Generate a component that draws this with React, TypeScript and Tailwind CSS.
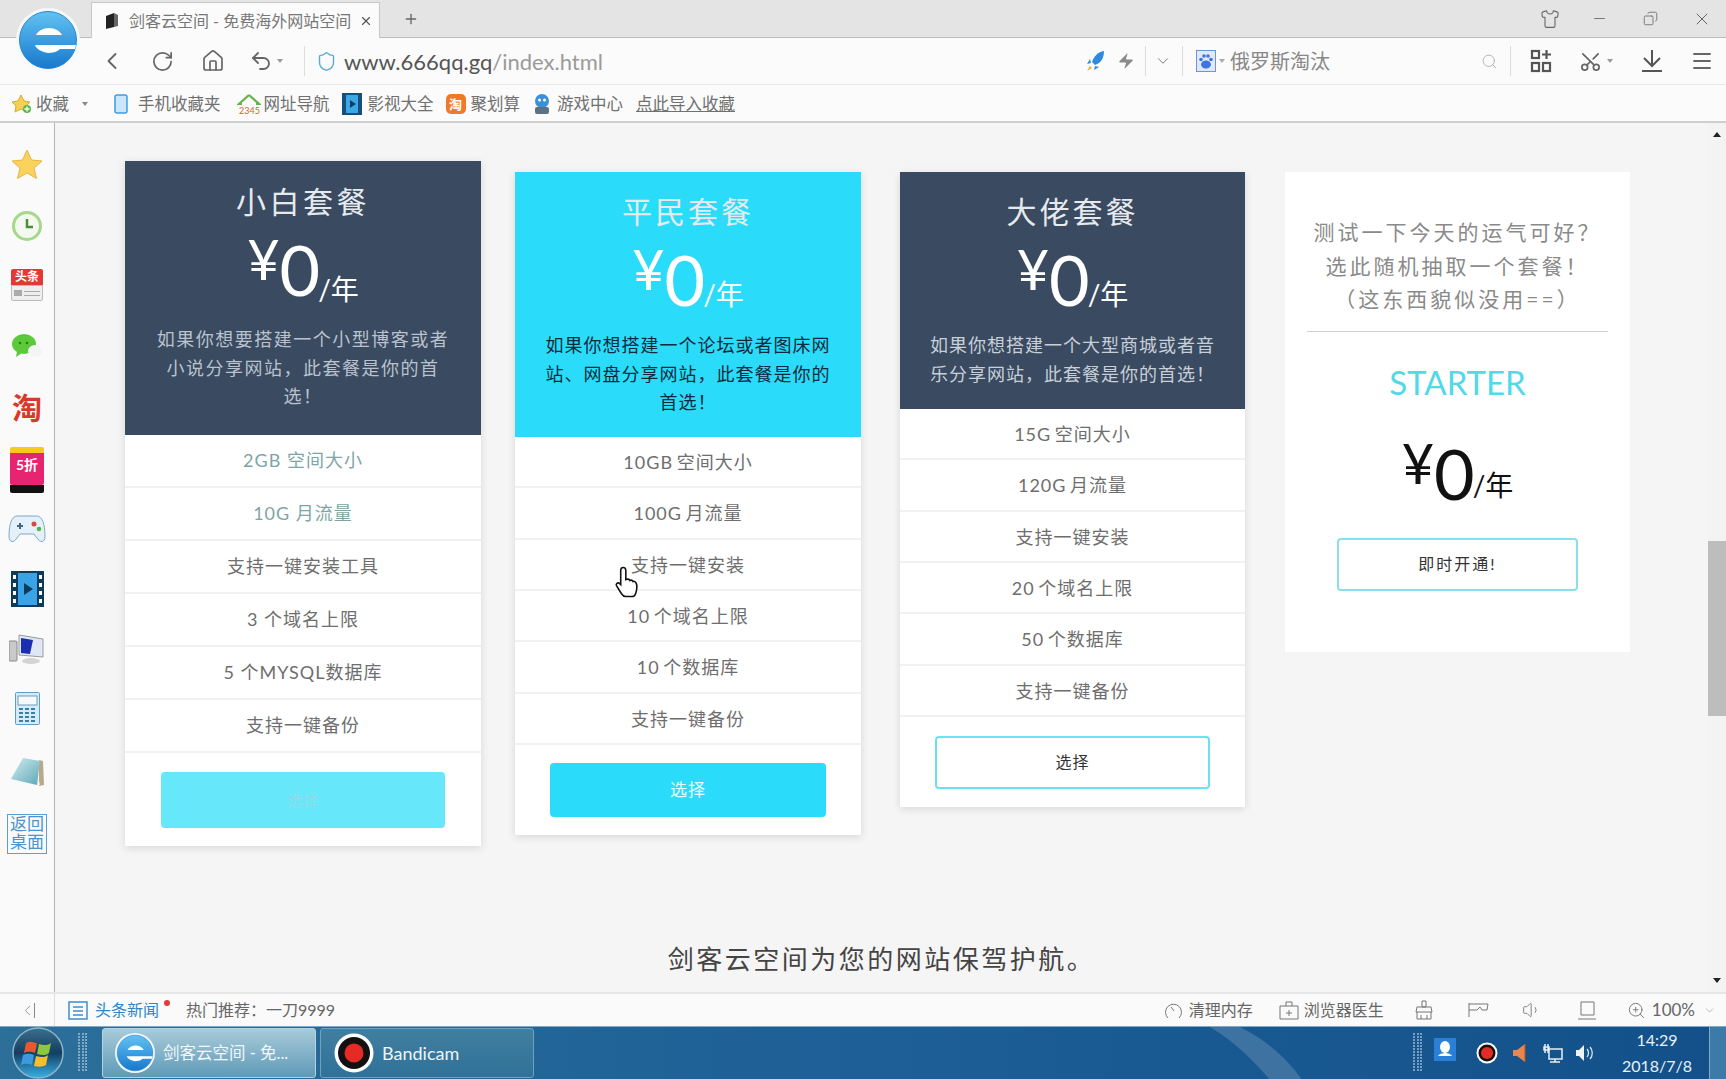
import React from 'react';
import { ChevronLeft, ChevronDown, RotateCw, House, Undo2, Shirt, Minus, Copy, X, Plus, Search, Scissors, Menu, Zap, Volume1, ZoomIn, Shield } from 'lucide-react';

function IeLogo({ size = 64, id }: { size?: number; id: string }) {
  return (
    <svg width={size} height={size} viewBox="0 0 64 64">
      <defs>
        <linearGradient id={id} x1="0" y1="0" x2="0" y2="1">
          <stop offset="0" stopColor="#62c2f2" />
          <stop offset="1" stopColor="#1878cc" />
        </linearGradient>
      </defs>
      <circle cx="32" cy="32" r="32" fill="#f4f8fb" />
      <circle cx="32" cy="32" r="28.500" fill={`url(#${id})`} stroke="#2a88d2" />
      <path d="M20 27c2-4 7-7 13-7s11 3 13 7z" fill="#fff" />
      <path d="M19 37h41l-1 4H44c-3 3-8 4-12 4-6-1-12-4-13-8z" fill="#fff" />
    </svg>
  );
}

function TopBar() {
  return (
    <div className="relative shrink-0">
      <div className="absolute left-[16px] top-[8px] z-10">
        <IeLogo size={64} id="ieTop" />
      </div>
      <div className="h-[38px] bg-[#e4e4e4] border-b border-[#bcbcbc] flex items-end pl-[91px] pr-[14px]">
        <div className="w-[289px] h-[36px] -mb-px bg-[#fbfbfb] border-x border-t border-[#c8c8c8] flex items-center pl-[12px] text-[16px] text-[#777]">
          <svg width="16" height="18" viewBox="0 0 16 18" className="shrink-0"><path d="M2 4l8-3v14l-8 2z" fill="#222" /><path d="M10 1l4 2v11l-4 1z" fill="#666" /></svg>
          <span className="ml-[9px] w-[224px] whitespace-nowrap overflow-hidden">剑客云空间 - 免费海外网站空间</span>
          <X size={14} className="ml-[6px] shrink-0 text-[#555]" />
        </div>
        <Plus size={16} strokeWidth={2} className="ml-[23px] mb-[10px] text-[#666]" />
        <div className="ml-auto flex items-center h-full text-[#666]">
          <Shirt size={20} strokeWidth={1.3} />
          <Minus size={17} strokeWidth={1.2} className="ml-[31px]" />
          <Copy size={15} strokeWidth={1.3} className="ml-[35px] -scale-x-100" />
          <X size={20} strokeWidth={1.2} className="ml-[34px]" />
        </div>
      </div>
      <div className="h-[47px] bg-[#fbfbfb] border-b border-[#eaeaea] flex items-center text-[#666] relative">
        <ChevronLeft size={28} strokeWidth={1.6} className="ml-[98px]" />
        <RotateCw size={23} strokeWidth={1.8} className="ml-[25px]" />
        <House size={24} strokeWidth={1.7} className="ml-[27px]" />
        <Undo2 size={24} strokeWidth={1.8} className="ml-[24px]" />
        <span className="ml-[4px] w-0 h-0 border-x-[3px] border-x-transparent border-t-[4px] border-t-[#999]" />
        <span className="ml-[21px] w-px h-[30px] bg-[#ddd]" />
        <Shield size={21} strokeWidth={1.6} className="ml-[11px] text-[#59a9d8]" />
        <span className="ml-[7px] text-[22px] text-[#9a9a9a]"><span className="text-[#555]">www.666qq.gq</span>/index.html</span>
        <div className="ml-auto flex items-center">
          <svg width="20" height="22" viewBox="0 0 20 22"><path d="M18 1c-6 1-10 5-12 11l3 3c6-2 9-7 9-14z" fill="#2d8be0" /><path d="M5 13l-4 1 3-5zM9 16l-1 4 5-3z" fill="#2d8be0" /><path d="M4 16l2 2-5 3z" fill="#f2a833" /></svg>
          <Zap size={18} strokeWidth={0} className="ml-[11px] fill-[#8a8a8a]" />
          <span className="ml-[10px] w-px h-[30px] bg-[#ddd]" />
          <ChevronDown size={18} strokeWidth={1.3} className="ml-[8px] text-[#777]" />
          <span className="ml-[10px] w-px h-[30px] bg-[#ddd]" />
          <svg width="20" height="22" viewBox="0 0 20 22" className="ml-[13px]"><rect x="0.5" y="0.5" width="19" height="21" fill="#dfe9fa" stroke="#6e93dc" /><ellipse cx="10" cy="14.5" rx="5" ry="4" fill="#3f75dd" /><circle cx="5" cy="9.5" r="1.8" fill="#3f75dd" /><circle cx="8" cy="6" r="1.8" fill="#3f75dd" /><circle cx="12" cy="6" r="1.8" fill="#3f75dd" /><circle cx="15" cy="9.5" r="1.8" fill="#3f75dd" /></svg>
          <span className="ml-[3px] w-0 h-0 border-x-[3px] border-x-transparent border-t-[4px] border-t-[#aaa]" />
          <span className="ml-[5px] w-[251px] text-[20px] leading-none text-[#888]">俄罗斯淘汰</span>
          <Search size={17} strokeWidth={1.2} className="text-[#aaa]" />
          <span className="ml-[12px] w-px h-[30px] bg-[#ddd]" />
          <svg width="22" height="24" viewBox="0 0 22 24" fill="none" stroke="#555" strokeWidth="2.2" className="ml-[19px]"><rect x="2" y="2" width="7" height="7" /><rect x="2" y="14" width="7" height="8" /><rect x="13" y="14" width="7" height="8" /><path d="M16.500 1v9M12 5.500h9" /></svg>
          <Scissors size={23} strokeWidth={1.8} className="ml-[27px] -rotate-90" />
          <span className="ml-[5px] w-0 h-0 border-x-[3px] border-x-transparent border-t-[4px] border-t-[#999]" />
          <svg width="22" height="24" viewBox="0 0 22 24" fill="none" stroke="#555" strokeWidth="2" className="ml-[28px]"><path d="M11 1v15M3 9l8 8 8-8M1 22h20" /></svg>
          <Menu size={24} strokeWidth={1.9} className="ml-[27px] mr-[12px]" />
        </div>
      </div>
      <div className="h-[38px] pt-[2px] bg-[#fbfbfb] border-b-2 border-[#cfcfcf] flex items-center text-[16.500px] text-[#707070] pl-[11px] whitespace-nowrap">
        <svg width="22" height="20" viewBox="0 0 22 20"><path d="M10 1l3 6 6 1-4 4 1 6-6-3-6 3 1-6-4-4 6-1z" fill="#f7cf55" stroke="#d8a92f" /><circle cx="16" cy="15" r="4" fill="#57b84b" /><path d="M16 12.500v5M13.500 15h5" stroke="#fff" strokeWidth="1.300" /></svg>
        <span className="ml-[3px]">收藏</span>
        <span className="ml-[13px] w-0 h-0 border-x-[3px] border-x-transparent border-t-[4px] border-t-[#888]" />
        <svg width="14" height="20" viewBox="0 0 14 20" className="ml-[26px]"><rect x="1" y="1" width="12" height="18" rx="2" fill="#c9e6fa" stroke="#3f9ddf" strokeWidth="1.500" /></svg>
        <span className="ml-[10px]">手机收藏夹</span>
        <svg width="24" height="22" viewBox="0 0 24 22" className="ml-[16px]"><path d="M12 2L2 11h3M12 2l10 9h-3" fill="none" stroke="#63b446" strokeWidth="2.200" /><text x="2" y="21" fontSize="9" fill="#d9622b" fontFamily="Lato">2345</text></svg>
        <span className="ml-[3px]">网址导航</span>
        <svg width="20" height="22" viewBox="0 0 20 22" className="ml-[12px]"><rect width="20" height="22" fill="#14507f" /><rect x="4" y="2" width="12" height="18" fill="#3ea7e6" /><path d="M8 7l6 4-6 4z" fill="#0e3f66" /></svg>
        <span className="ml-[6px]">影视大全</span>
        <span className="ml-[12px] w-[20px] h-[20px] rounded-[5px] bg-[#f0792a] text-white text-[13px] leading-[20px] text-center font-bold">淘</span>
        <span className="ml-[5px]">聚划算</span>
        <svg width="18" height="22" viewBox="0 0 18 22" className="ml-[13px]"><ellipse cx="9" cy="8" rx="7" ry="7" fill="#3a90d8" /><circle cx="6.500" cy="7" r="1.500" fill="#fff" /><circle cx="11.500" cy="7" r="1.500" fill="#fff" /><rect x="2" y="14" width="14" height="7" rx="2" fill="#5a7186" /></svg>
        <span className="ml-[6px]">游戏中心</span>
        <span className="ml-[13px] underline">点此导入收藏</span>
      </div>
    </div>
  );
}

function SideBar() {
  return (
    <div className="w-[55px] shrink-0 bg-[#fafafa] border-r border-[#b5b5b5] flex flex-col items-center pt-[26px]">
      <div className="h-[62px]">
        <svg width="32" height="30" viewBox="0 0 32 30"><path d="M16 1l4.500 10 10.500 1-8 7 2.500 10.500L16 24l-9.500 5.500L9 19l-8-7 10.500-1z" fill="#fbd35c" stroke="#e5b547" /></svg>
      </div>
      <div className="h-[58px]">
        <svg width="30" height="30" viewBox="0 0 30 30" fill="none"><circle cx="15" cy="15" r="13.500" fill="#f3f9ee" stroke="#a5d88a" strokeWidth="3" /><path d="M15 8v8h6" stroke="#4b8c3a" strokeWidth="2.500" /></svg>
      </div>
      <div className="h-[63px] w-[32px]">
        <div className="h-[16px] bg-[#e03a35] text-white text-[12px] leading-[16px] text-center font-bold rounded-t-[2px]">头条</div>
        <div className="h-[16px] bg-[#eee] border border-[#bbb] rounded-b-[2px] flex items-center gap-[2px] px-[2px]"><span className="w-[8px] h-[6px] bg-[#aaa]" /><span className="flex-1 h-[5px] border-y border-[#aaa]" /></div>
      </div>
      <div className="h-[57px]">
        <svg width="32" height="28" viewBox="0 0 32 28"><ellipse cx="13" cy="12" rx="12" ry="10" fill="#5cc83b" /><path d="M6 19l-1 6 6-4z" fill="#5cc83b" /><circle cx="9" cy="11" r="1.300" fill="#2d7a1c" /><circle cx="16" cy="11" r="1.300" fill="#2d7a1c" /><ellipse cx="24" cy="19" rx="7" ry="6" fill="#f4f4f4" /></svg>
      </div>
      <div className="h-[60px] text-[#d8392c] text-[30px] leading-[36px] font-bold">淘</div>
      <div className="h-[65px] w-[34px]">
        <div className="h-[38px] mt-[-2px] bg-[#e7246f] rounded-[2px] border-t-[6px] border-[#f7c81e] text-white text-[14px] leading-[24px] text-center font-bold">5折</div>
        <div className="h-[8px] bg-[#111] rounded-b-[2px]" />
      </div>
      <div className="h-[57px]">
        <svg width="38" height="30" viewBox="0 0 38 30"><path d="M9 2h20c5 0 8 8 8 20 0 7-5 7-8 2l-3-4H12l-3 4c-3 5-8 5-8-2C1 10 4 2 9 2z" fill="#e5f1fa" stroke="#7fa8c8" /><path d="M12 9v6M9 12h6" stroke="#41688c" strokeWidth="2" /><circle cx="26" cy="10" r="2.500" fill="#d94a3f" /><circle cx="31" cy="15" r="2.300" fill="#5ab548" /></svg>
      </div>
      <div className="h-[62px]">
        <svg width="33" height="36" viewBox="0 0 33 36"><rect width="33" height="36" fill="#0d3b5c" /><rect x="7" y="2" width="19" height="32" fill="#3aa3e5" /><path d="M13 12l9 6-9 6z" fill="#0d3b5c" /><path d="M2 4h3v4H2zM2 12h3v4H2zM2 20h3v4H2zM2 28h3v4H2zM28 4h3v4h-3zM28 12h3v4h-3zM28 20h3v4h-3zM28 28h3v4h-3z" fill="#fff" /></svg>
      </div>
      <div className="h-[59px]">
        <svg width="36" height="32" viewBox="0 0 36 32"><rect x="0" y="8" width="8" height="20" rx="1" fill="#c9c9c9" stroke="#888" /><path d="M10 2l24 4v18l-24-2z" fill="#dfe7f5" stroke="#999" /><path d="M12 5l12 2-3 14-9-1z" fill="#1a2fb0" /><ellipse cx="22" cy="28" rx="9" ry="3" fill="#d4d4d4" /></svg>
      </div>
      <div className="h-[66px]">
        <svg width="25" height="33" viewBox="0 0 25 33"><rect x="0.500" y="0.500" width="24" height="32" rx="1" fill="#d6ebf8" stroke="#5d9dc8" /><rect x="3" y="4" width="19" height="9" fill="#f5f9fc" stroke="#6e9dbc" /><path d="M4 17h4M10 17h4M16 17h4M4 21h4M10 21h4M16 21h4M4 25h4M10 25h4M16 25h4M4 29h4M10 29h4M16 29h4" stroke="#3c7eaa" strokeWidth="2" /></svg>
      </div>
      <div className="h-[56px]">
        <svg width="34" height="30" viewBox="0 0 34 30">
          <defs>
            <linearGradient id="noteBlue" x1="0" y1="0" x2="1" y2="1">
              <stop offset="0" stopColor="#d2ecf0" />
              <stop offset="1" stopColor="#5fa8b8" />
            </linearGradient>
          </defs>
          <path d="M29 2l4 1 1 24-5 1z" fill="#b9a98a" />
          <path d="M28 18l2 9-8-1z" fill="#f2f2f2" />
          <path d="M13 0l17 3-3 24L1 21z" fill="url(#noteBlue)" />
        </svg>
      </div>
      <div className="w-[40px] h-[40px] border border-[#5ba0d3] text-[#4b94cc] text-[17px] leading-[18px] text-center">返回<br />桌面</div>
    </div>
  );
}

function Price({ unitCls = 'mb-[2px]' }: { unitCls?: string }) {
  return (
    <div className="flex items-end justify-center">
      <span className="text-[56px] leading-[50px] mb-[20px]">¥</span>
      <span className="text-[70px] leading-[70px]">0</span>
      <span className={`text-[28px] leading-[36px] -ml-[2px] ${unitCls}`}>/年</span>
    </div>
  );
}

type PlanProps = {
  title: string;
  desc: string;
  rows: string[];
  wide?: boolean;
  headBg: string;
  descCls: string;
  pad: string;
  teal?: boolean;
  button: React.ReactNode;
  cls: string;
};

function Plan({ title, desc, rows, wide, headBg, descCls, pad, teal, button, cls }: PlanProps) {
  return (
    <div className={`bg-white shadow-[0_2px_8px_rgba(0,0,0,0.12)] shrink-0 ${cls}`}>
      <div className={`${headBg} ${pad} text-center text-white`}>
        <div className={`text-[30px] leading-[40px] text-[#e6eaee] ${wide ? 'tracking-[3.500px]' : 'tracking-[3px]'}`}>{title}</div>
        <div className="mt-[13px]"><Price unitCls={wide ? '-mb-[3px]' : 'mb-[2px]'} /></div>
        <div className={`${wide ? 'mt-[21px] tracking-[1.500px] px-[30px]' : 'mt-[17px] tracking-[1px] px-[30px]'} text-[18px] leading-[28.500px] ${descCls}`}>{desc}</div>
      </div>
      {rows.map((r, i) => (
        <div key={r} className={`${wide ? 'h-[53px]' : 'h-[51.330px] pt-[2px] [word-spacing:-2px]'} flex items-center justify-center border-b-2 border-[#f1f1f1] text-[18px] tracking-[1px] ${teal && i < 2 ? 'text-[#7ea5a5]' : 'text-[#6e6e6e]'}`}>{r}</div>
      ))}
      {button}
    </div>
  );
}

function Content() {
  return (
    <div className="flex-1 min-w-0 bg-[#f5f5f5] flex flex-col items-stretch pl-[70px] relative">
      <div className="flex items-start">
        <Plan
          wide
          cls="w-[356px] mt-[38px]"
          headBg="bg-[#3a4a61]"
          pad="pt-[20px] h-[274px]"
          descCls="text-[#b9c2cd]"
          title="小白套餐"
          desc="如果你想要搭建一个小型博客或者小说分享网站，此套餐是你的首选！"
          teal
          rows={['2GB 空间大小', '10G 月流量', '支持一键安装工具', '3 个域名上限', '5 个MYSQL数据库', '支持一键备份']}
          button={
            <div className="pt-[19px] pb-[18px] px-[36px]">
              <div className="h-[56px] rounded-[4px] bg-[#66e7fa] text-[#8fdcea] text-[16px] flex items-center justify-center">选择</div>
            </div>
          }
        />
        <Plan
          cls="w-[346px] ml-[34px] mt-[49px]"
          headBg="bg-[#2adcfa]"
          pad="pt-[19px] h-[265px]"
          descCls="text-[#0d2a3a]"
          title="平民套餐"
          desc="如果你想搭建一个论坛或者图床网站、网盘分享网站，此套餐是你的首选！"
          rows={['10GB 空间大小', '100G 月流量', '支持一键安装', '10 个域名上限', '10 个数据库', '支持一键备份']}
          button={
            <div className="pt-[18px] pb-[18px] px-[35px]">
              <div className="h-[54px] rounded-[4px] bg-[#2adcfa] text-[#e6fbff] text-[17px] tracking-[1px] flex items-center justify-center">选择</div>
            </div>
          }
        />
        <Plan
          cls="w-[345px] ml-[39px] mt-[49px]"
          headBg="bg-[#3a4a61]"
          pad="pt-[19px] h-[237px]"
          descCls="text-[#c8cfd8]"
          title="大佬套餐"
          desc="如果你想搭建一个大型商城或者音乐分享网站，此套餐是你的首选！"
          rows={['15G 空间大小', '120G 月流量', '支持一键安装', '20 个域名上限', '50 个数据库', '支持一键备份']}
          button={
            <div className="pt-[19px] pb-[18px] px-[35px]">
              <div className="h-[53px] rounded-[4px] border-2 border-[#6ce2ef] text-[#333] text-[16px] tracking-[1px] flex items-center justify-center">选择</div>
            </div>
          }
        />
        <div className="w-[345px] ml-[40px] mt-[49px] h-[480px] bg-white shrink-0 flex flex-col items-center pt-[43px]">
          <div className="text-[21px] leading-[33.500px] tracking-[3px] text-[#8a8a8a] text-center whitespace-nowrap">
            测试一下今天的运气可好？<br />选此随机抽取一个套餐！<br />（这东西貌似没用==）
          </div>
          <div className="w-[301px] h-px bg-[#cfcfcf] mt-[15px]" />
          <div className="text-[33px] leading-[40px] text-[#52d9e8] mt-[30px]">STARTER</div>
          <div className="mt-[36px] text-[#111]"><Price unitCls="mb-[5px]" /></div>
          <div className="w-[241px] h-[53px] mt-[30px] rounded-[4px] border-2 border-[#8ae0ea] text-[#333] text-[16px] tracking-[2px] flex items-center justify-center">即时开通!</div>
        </div>
      </div>
      <div className="mt-[96px] pr-[70px] text-center text-[26px] leading-[34px] tracking-[2.500px] text-[#444]">剑客云空间为您的网站保驾护航。</div>
      <svg width="30" height="34" viewBox="0 0 24 28" className="absolute left-[558px] top-[442px]">
        <path d="M8 2c1.500 0 2.200 1 2.200 2.500V12l1-.3c1-.2 2 .2 2.300 1 1-.4 2.200-.1 2.600.9 1-.3 2.200.2 2.500 1.200.8 1.500.8 5-.1 8-.5 2-1.500 3.200-3 3.200H10c-1.500 0-2.500-1-3.500-2.500L2.500 17c-.7-1.300 1-3 2.500-1.800l1 1V4.500C6 3 6.700 2 8 2z" fill="#fff" stroke="#111" strokeWidth="1.300" />
      </svg>
    </div>
  );
}

function ScrollBar() {
  return (
    <div className="w-[18px] shrink-0 bg-[#f3f3f3] flex flex-col items-center">
      <span className="mt-[9px] w-0 h-0 border-x-[4px] border-x-transparent border-b-[5px] border-b-[#222]" />
      <div className="w-[18px] h-[175px] mt-[404px] bg-[#bdbdbd]" />
      <span className="mt-auto mb-[9px] w-0 h-0 border-x-[4px] border-x-transparent border-t-[5px] border-t-[#222]" />
    </div>
  );
}

function StatusBar() {
  return (
    <div className="h-[34px] shrink-0 bg-[#fafafa] border-t-2 border-[#e6e6e6] flex items-center text-[16px] text-[#666] whitespace-nowrap">
      <div className="w-[55px] h-full border-r border-[#ddd] flex items-center justify-center text-[#888]">
        <ChevronLeft size={17} strokeWidth={1.2} />
        <span className="w-px h-[15px] bg-[#888] -ml-[2px]" />
      </div>
      <svg width="20" height="19" viewBox="0 0 20 19" fill="none" stroke="#3e8fd0" strokeWidth="1.500" className="ml-[13px]"><rect x="1" y="1" width="18" height="17" /><path d="M5 6h10M5 10h10M5 14h10" /></svg>
      <span className="ml-[7px] text-[#2f86c9]">头条新闻</span>
      <span className="ml-[5px] mb-[14px] w-[6px] h-[6px] rounded-full bg-[#e23b3b]" />
      <span className="ml-[16px]">热门推荐：一刀9999</span>
      <div className="ml-auto flex items-center text-[#666]">
        <svg width="19" height="19" viewBox="0 0 19 19" fill="none" stroke="#777"><path d="M4 17a8 8 0 1 1 11 0" /><path d="M7 6l3 4" /></svg>
        <span className="ml-[6px]">清理内存</span>
        <svg width="20" height="19" viewBox="0 0 20 19" fill="none" stroke="#777" className="ml-[26px]"><path d="M1 5h18v13H1zM7 5V1h6v4M10 9v6M7 12h6" /></svg>
        <span className="ml-[5px]">浏览器医生</span>
        <svg width="20" height="20" viewBox="0 0 20 20" fill="none" stroke="#777" className="ml-[30px]"><path d="M8 1h4v6H8zM3 7h14l1 5H2zM3 12v7h14v-7M7 19v-4M13 19v-4" /></svg>
        <svg width="22" height="16" viewBox="0 0 22 16" fill="none" stroke="#777" className="ml-[33px]"><path d="M2 1v14M2 2h19l-1 6h-5l-2-3-3 3H2" /></svg>
        <Volume1 size={20} strokeWidth={1.1} className="ml-[33px] text-[#777]" />
        <svg width="20" height="19" viewBox="0 0 20 19" fill="none" stroke="#777" className="ml-[35px]"><path d="M4 1h13v13H4zM1 18h18" /></svg>
        <ZoomIn size={19} strokeWidth={1.200} className="ml-[30px] text-[#777]" />
        <span className="ml-[6px] text-[17px]">100%</span>
        <ChevronDown size={13} strokeWidth={1.200} className="ml-[8px] mr-[10px] text-[#999]" />
      </div>
    </div>
  );
}

function TaskBar() {
  return (
    <div className="relative h-[53px] shrink-0 border-t border-[#7fa9c6] bg-gradient-to-r from-[#2c6f99] via-[#1d5f96] to-[#13508a] flex items-center overflow-hidden whitespace-nowrap text-white">
      <svg width="130" height="53" viewBox="0 0 130 53" className="absolute left-[1190px] top-0"><path d="M20 0h30c30 15 50 35 62 53H80C65 35 45 15 20 0z" fill="#fff" opacity="0.16" /></svg>
      <svg width="52" height="52" viewBox="0 0 52 52" className="ml-[12px] shrink-0">
        <defs>
          <linearGradient id="orbBg" x1="0" y1="0" x2="0" y2="1">
            <stop offset="0" stopColor="#3d6f8c" />
            <stop offset="0.5" stopColor="#123f63" />
            <stop offset="1" stopColor="#3cb0e4" />
          </linearGradient>
        </defs>
        <circle cx="26" cy="26" r="25" fill="url(#orbBg)" stroke="#8db4c9" strokeWidth="1.500" />
        <path d="M14 16c5-3 8 0 11 0l-2 10c-3-1-7-2-11 0z" fill="#e8572e" />
        <path d="M27 17c4 1 8 2 12-1l-2 10c-3 3-8 2-12 1z" fill="#8dc63f" />
        <path d="M11 28c4-2 8-1 11 0l-2 10c-3-1-7-2-11 0z" fill="#3c9ae0" />
        <path d="M24 29c4 1 9 2 12-1l-2 10c-3 2-8 2-12 1z" fill="#f8bd2a" />
      </svg>
      <div className="ml-[14px] w-[10px] h-[40px] grid grid-cols-3 gap-px opacity-50 shrink-0 content-start">
        {Array.from({ length: 39 }).map((_, i) => <span key={i} className="w-[2px] h-[2px] bg-[#dbe8f2]" />)}
      </div>
      <div className="ml-[14px] w-[214px] h-[50px] rounded-[3px] border border-[#b5d2df] bg-gradient-to-b from-[#a8cbd9] to-[#5e9ab8] flex items-center pl-[12px] shrink-0">
        <IeLogo size={40} id="ieTask" />
        <span className="ml-[8px] text-[16.500px] text-[#f1f7fa]">剑客云空间 - 免...</span>
      </div>
      <div className="ml-[4px] w-[214px] h-[50px] rounded-[3px] border border-[#6fa2bd] bg-gradient-to-b from-[#417f9f] to-[#2f7199] flex items-center pl-[13px] shrink-0">
        <svg width="40" height="40" viewBox="0 0 40 40"><circle cx="20" cy="20" r="19.500" fill="#fff" /><circle cx="20" cy="20" r="16" fill="#111" /><circle cx="20" cy="20" r="9.500" fill="#e52b25" /></svg>
        <span className="ml-[8px] text-[18px] text-[#eef5f9]">Bandicam</span>
      </div>
      <div className="ml-auto flex items-center shrink-0">
        <div className="w-[10px] h-[40px] grid grid-cols-3 gap-px opacity-50 content-start">
          {Array.from({ length: 39 }).map((_, i) => <span key={i} className="w-[2px] h-[2px] bg-[#dbe8f2]" />)}
        </div>
        <svg width="22" height="23" viewBox="0 0 22 23" className="ml-[11px] mb-[8px]"><rect width="22" height="23" fill="#2a80d8" /><ellipse cx="11" cy="9" rx="5" ry="6" fill="#fff" /><path d="M4 18c2-4 12-4 14 0z" fill="#fff" /></svg>
        <svg width="22" height="22" viewBox="0 0 22 22" className="ml-[20px]"><circle cx="11" cy="11" r="10.500" fill="#fff" /><circle cx="11" cy="11" r="8.500" fill="#111" /><circle cx="11" cy="11" r="6" fill="#e52b25" /></svg>
        <svg width="16" height="20" viewBox="0 0 16 20" className="ml-[13px]"><path d="M2 7h4l8-6v18l-8-6H2z" fill="#e8864f" /><path d="M14 1v18" stroke="#b5532a" /></svg>
        <svg width="20" height="20" viewBox="0 0 20 20" fill="none" stroke="#e6eef4" strokeWidth="1.500" className="ml-[16px]"><rect x="6" y="6" width="13" height="10" /><path d="M2 1v9M5 1v9M1 4h5v3H1zM12 16v3M7 19h10" /></svg>
        <svg width="20" height="20" viewBox="0 0 20 20" className="ml-[12px]"><path d="M1 7h3l5-5v16l-5-5H1z" fill="#edf3f7" /><path d="M12 6c2 2 2 6 0 8M15 4c3 3 3 9 0 12" fill="none" stroke="#dce7ef" strokeWidth="1.300" /></svg>
        <div className="ml-[18px] w-[88px] text-center text-[16px] leading-[26px] text-[#e8f1f6]">14:29<br />2018/7/8</div>
        <div className="ml-[8px] w-[17px] h-[53px] bg-[#3d7aa8] border-l border-[#82abc6]" />
      </div>
    </div>
  );
}

export default function App() {
  return (
    <div className="w-[1726px] h-[1079px] flex flex-col overflow-hidden font-['Lato','Noto_Sans_CJK_SC',sans-serif]">
      <TopBar />
      <div className="flex-1 min-h-0 flex">
        <SideBar />
        <Content />
        <ScrollBar />
      </div>
      <StatusBar />
      <TaskBar />
    </div>
  );
}
